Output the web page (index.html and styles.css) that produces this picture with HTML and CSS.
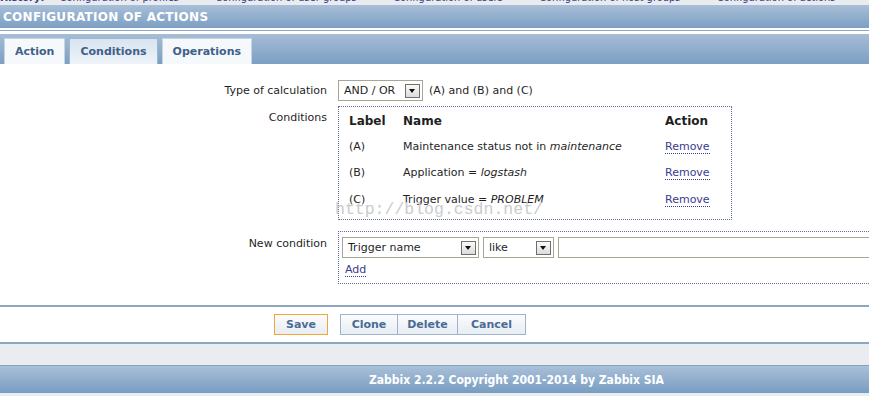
FILE: index.html
```html
<!DOCTYPE html>
<html lang="en">
<head>
    <meta charset="UTF-8">
    <title>Configuration of actions</title>
    <link rel="stylesheet" href="styles.css">
</head>
<body>
    <div class="history">
        <p><b>History:</b> <a>Configuration of profiles</a> &raquo; <a>Configuration of user groups</a> &raquo; <a>Configuration of users</a> &raquo; <a>Configuration of host groups</a> &raquo; <a>Configuration of actions</a></p>
    </div>

    <div class="page-title">CONFIGURATION OF ACTIONS</div>
    <div class="title-rule"></div>

    <div class="tabs">
        <div class="tab">Action</div>
        <div class="tab active">Conditions</div>
        <div class="tab">Operations</div>
    </div>

    <div class="form">
        <div class="form-row calc-row">
            <div class="form-label">Type of calculation</div>
            <div class="form-field">
                <span class="select calc-select">AND / OR<span class="arrow"></span></span>
                <span class="calc-text">(A) and (B) and (C)</span>
            </div>
        </div>

        <div class="form-row">
            <div class="form-label label-top">Conditions</div>
            <div class="form-field">
                <div class="dotted-box conditions-box">
                    <table class="conditions">
                        <tr>
                            <th class="col-label">Label</th>
                            <th class="col-name">Name</th>
                            <th>Action</th>
                        </tr>
                        <tr>
                            <td>(A)</td>
                            <td>Maintenance status not in <i>maintenance</i></td>
                            <td><a class="link">Remove</a></td>
                        </tr>
                        <tr>
                            <td>(B)</td>
                            <td>Application = <i>logstash</i></td>
                            <td><a class="link">Remove</a></td>
                        </tr>
                        <tr>
                            <td>(C)</td>
                            <td>Trigger value = <i>PROBLEM</i></td>
                            <td><a class="link">Remove</a></td>
                        </tr>
                    </table>
                    <div class="watermark">http://blog.csdn.net/</div>
                </div>
            </div>
        </div>

        <div class="form-row last-row">
            <div class="form-label label-top new-label">New condition</div>
            <div class="form-field grow">
                <div class="dotted-box new-box">
                    <div class="new-inputs">
                        <span class="select type-select">Trigger name<span class="arrow"></span></span>
                        <span class="select op-select">like<span class="arrow"></span></span>
                        <span class="text-input"></span>
                    </div>
                    <a class="link add-link">Add</a>
                </div>
            </div>
        </div>
    </div>

    <div class="buttons">
        <span class="button save">Save</span>
        <span class="button-group">
            <span class="button clone">Clone</span><span class="button delete">Delete</span><span class="button cancel">Cancel</span>
        </span>
    </div>

    <div class="page-gap"></div>
    <div class="footer">Zabbix 2.2.2 Copyright 2001-2014 by Zabbix SIA</div>
    <div class="page-end"></div>
</body>
</html>
```

FILE: styles.css
```css
body {
    margin: 0;
    background: #ffffff;
    font-family: 'DejaVu Sans', sans-serif;
    font-size: 11px;
    color: #1f1f1f;
    overflow: hidden;
}
.history {
    height: 5px;
    overflow: hidden;
    background: #e9ecef;
}
.history p {
    margin: -8px 0 0 0;
    white-space: nowrap;
    color: #3a3a8c;
    font-family: 'DejaVu Sans Condensed', 'DejaVu Sans', sans-serif;
    font-size: 11px;
    line-height: 12px;
}
.history a {
    margin: 0 12px;
}
.page-title {
    height: 23px;
    line-height: 24px;
    padding-left: 3px;
    background: linear-gradient(#a8bfd8, #7c9fc3);
    color: #ffffff;
    font-weight: bold;
    font-size: 12px;
    letter-spacing: 0.3px;
}
.title-rule {
    height: 1px;
    margin: 2px 0 3px 0;
    background: #8ba5c3;
}
.tabs {
    display: flex;
    align-items: flex-end;
    height: 30px;
    padding-left: 4px;
    gap: 4px;
    background: linear-gradient(#a6bdd6, #7b9fc4);
}
.tab {
    box-sizing: border-box;
    height: 26px;
    line-height: 26px;
    padding: 0 10px;
    background: #f6f9fc;
    border: 1px solid #c6d4e3;
    border-bottom: none;
    color: #3f6089;
    font-weight: bold;
}
.tab.active {
    background: linear-gradient(#d8e4f0, #eef3f8);
    border-color: #9fb6cf;
}
.form {
    padding-top: 16px;
    padding-bottom: 10px;
    border-bottom: 2px solid #8fa6c0;
}
.form-row {
    display: flex;
    margin-bottom: 11px;
}
.calc-row {
    margin-bottom: 5px;
    align-items: center;
}
.form-label {
    width: 327px;
    flex: none;
    text-align: right;
    padding-right: 11px;
}
.label-top {
    padding-top: 5px;
}
.new-label {
    padding-top: 6px;
}
.form-field {
    display: flex;
    align-items: center;
}
.grow {
    flex: 1;
    min-width: 0;
}
.select {
    position: relative;
    display: inline-block;
    box-sizing: border-box;
    height: 21px;
    line-height: 19px;
    border: 1px solid #a6a697;
    padding-left: 5px;
    background: #ffffff;
}
.arrow {
    position: absolute;
    right: 2px;
    top: 3px;
    width: 13px;
    height: 12px;
    border: 1px solid #6f6f6f;
    background: linear-gradient(#fafafa, #dcdcdc);
}
.arrow::after {
    content: '';
    position: absolute;
    left: 3px;
    top: 4px;
    border-left: 3.5px solid transparent;
    border-right: 3.5px solid transparent;
    border-top: 4px solid #111111;
}
.calc-select {
    width: 85px;
}
.calc-text {
    margin-left: 6px;
}
.dotted-box {
    position: relative;
    box-sizing: border-box;
    border: 1px dotted #5d6fa0;
}
.conditions-box {
    width: 394px;
    height: 114px;
    padding: 4px 10px 0 10px;
}
.conditions {
    border-collapse: collapse;
    width: 100%;
}
.conditions th {
    text-align: left;
    vertical-align: top;
    font-size: 12px;
    font-weight: bold;
    height: 22px;
    line-height: 21px;
    padding: 0;
}
.conditions td {
    height: 26.5px;
    padding: 0;
}
.col-label {
    width: 54px;
}
.col-name {
    width: 262px;
}
.link {
    color: #3b3b8e;
    border-bottom: 1px dotted #3b3b8e;
    cursor: pointer;
}
.watermark {
    position: absolute;
    left: -4px;
    top: 93px;
    font-family: 'Liberation Mono', monospace;
    font-size: 16.5px;
    color: #cbcbcb;
}
.new-box {
    width: 100%;
    height: 53px;
    border-right: none;
    padding: 5px 0 0 3px;
}
.new-inputs {
    display: flex;
    gap: 4px;
    margin-bottom: 5px;
}
.type-select {
    width: 137px;
    flex: none;
}
.op-select {
    width: 71px;
    flex: none;
}
.text-input {
    flex: 1;
    height: 21px;
    box-sizing: border-box;
    border: 1px solid #a6a697;
    border-right: none;
}
.add-link {
    margin-left: 3px;
}
.buttons {
    display: flex;
    align-items: center;
    height: 35px;
    padding-left: 274px;
    border-bottom: 2px solid #8fa6c0;
}
.button-group {
    display: flex;
    margin-left: 12px;
}
.button {
    box-sizing: border-box;
    height: 21px;
    line-height: 19px;
    text-align: center;
    border: 1px solid #9fb4cc;
    background: linear-gradient(#fbfcfd, #e7edf4);
    color: #4b6b94;
    font-weight: bold;
}
.button-group .button + .button {
    border-left: none;
}
.save {
    width: 54px;
    border-color: #f4a534;
}
.clone {
    width: 58px;
}
.delete {
    width: 60px;
}
.cancel {
    width: 68px;
}
.page-gap {
    height: 21px;
    background: #e9edf0;
    border-bottom: 1px solid #88a2bf;
}
.footer {
    height: 27px;
    line-height: 28px;
    padding-left: 369px;
    background: linear-gradient(#a9c0d8, #789dc2);
    color: #ffffff;
    font-family: 'DejaVu Sans Condensed', 'DejaVu Sans', sans-serif;
    font-weight: bold;
    font-size: 12px;
}
.page-end {
    height: 10px;
    background: #e9edf0;
}
```
